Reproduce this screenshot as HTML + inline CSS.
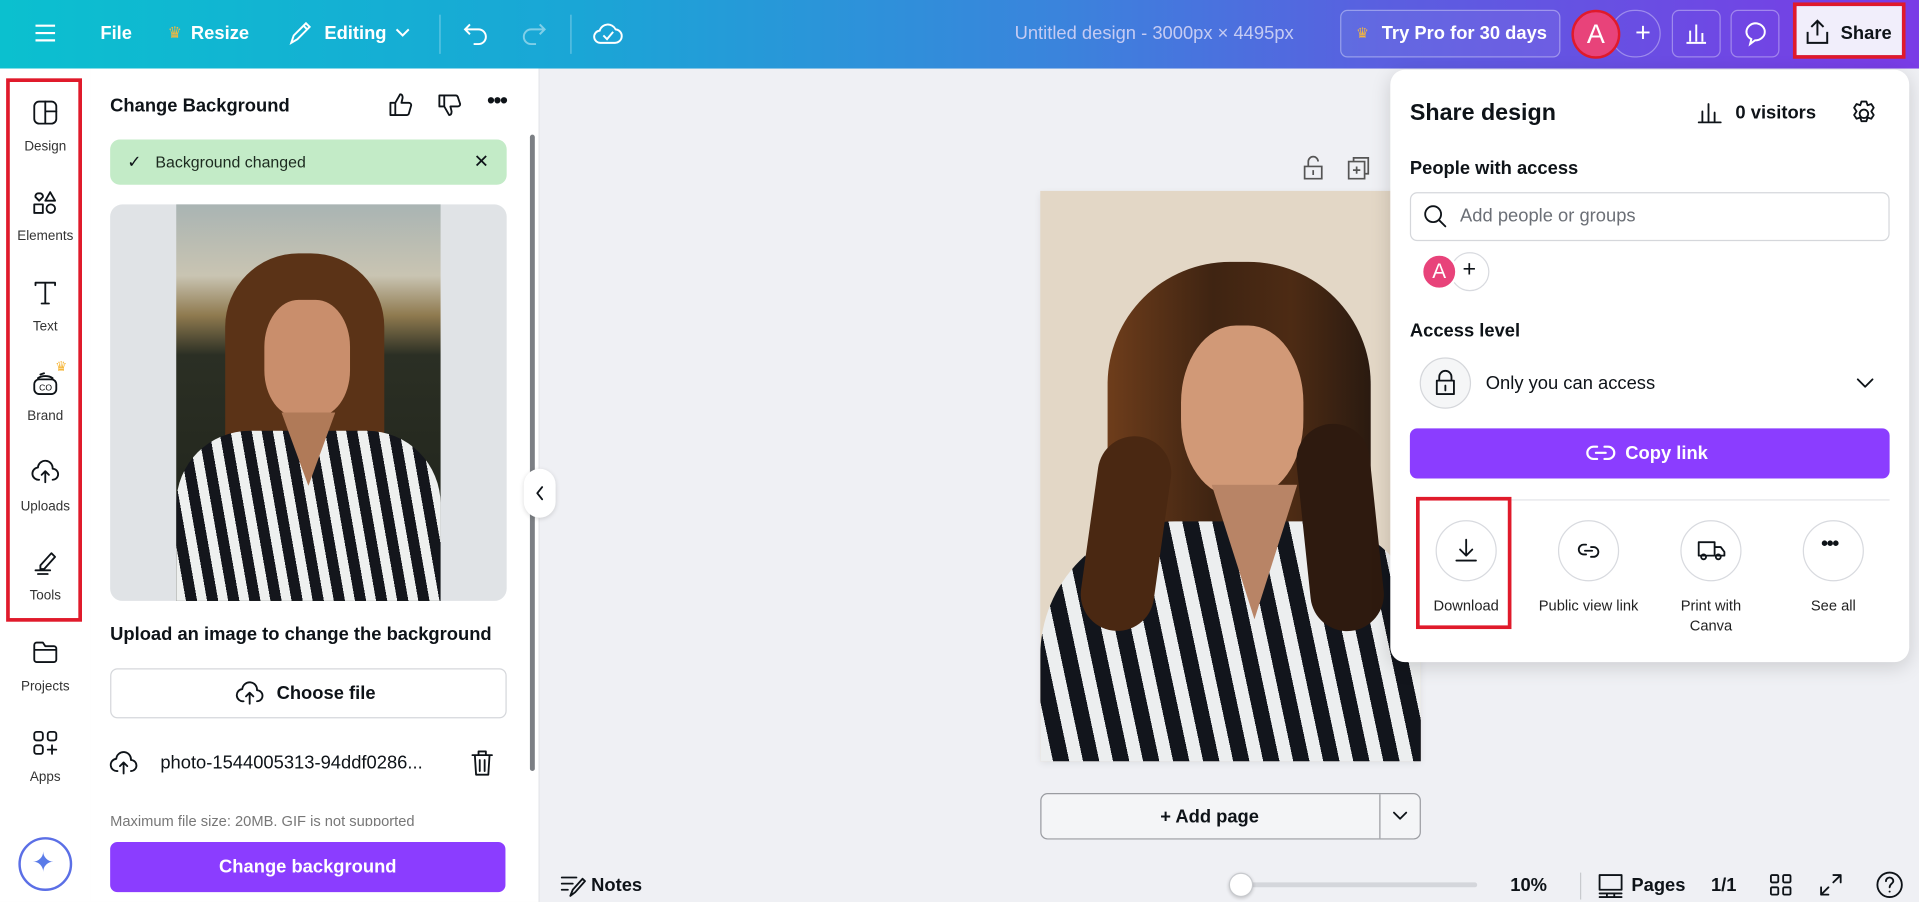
<!DOCTYPE html>
<html><head><meta charset="utf-8">
<style>
*{box-sizing:border-box;margin:0;padding:0}
html,body{width:1919px;height:902px;overflow:hidden;background:#eff0f4}
#w{position:absolute;left:0;top:0;width:1568px;height:737px;transform:scale(1.22385);transform-origin:0 0;font-family:"Liberation Sans",sans-serif;color:#0e1318;background:#eff0f4}
.a{position:absolute}
.top{left:0;top:0;width:1568px;height:56px;background:linear-gradient(90deg,#0bc0cf 0%,#1aa6d6 30%,#3a84dc 55%,#5a5fe0 72%,#7a3be6 100%)}
.tw{color:#fff;font-weight:bold;font-size:15px}
.side{left:0;top:56px;width:74px;height:681px;background:#fff}
.lbl{position:absolute;width:74px;text-align:center;font-size:11px;color:#333;left:0}
.panel{left:74px;top:56px;width:367px;height:681px;background:#fff;border-right:1px solid #e3e4e8}
svg{overflow:visible}
.ic{fill:none;stroke:#0e1318;stroke-width:1.5;stroke-linecap:round;stroke-linejoin:round}
.pop{left:1136px;top:57px;width:424px;height:484px;background:#fff;border-radius:12px;box-shadow:0 4px 16px rgba(0,0,0,.15)}
.circ{position:absolute;width:50px;height:50px;border:1px solid #d8dadf;border-radius:50%;top:425px}
.cl{position:absolute;font-size:12px;color:#222;text-align:center;width:100px;top:487px;line-height:16px}
</style></head><body><div id="w">
<div class="a top"></div>
<!-- top bar -->
<svg class="a" style="left:28px;top:19px" width="18" height="16"><path d="M1 2h16M1 8h16M1 14h16" stroke="#fff" stroke-width="1.8"/></svg>
<div class="a tw" style="left:82px;top:19px">File</div>
<div class="a" style="left:137px;top:19px;color:#f6b73c;font-size:13px">♛</div>
<div class="a tw" style="left:156px;top:19px">Resize</div>
<svg class="a" style="left:235px;top:17px" width="20" height="20"><path d="M3 18l2-6L15 2l3 3L8 15z M13 4l3 3" fill="none" stroke="#fff" stroke-width="1.6"/></svg>
<div class="a tw" style="left:265px;top:19px">Editing</div>
<svg class="a" style="left:322px;top:22px" width="14" height="10"><path d="M2 2l5 5 5-5" fill="none" stroke="#fff" stroke-width="1.6"/></svg>
<div class="a" style="left:359px;top:12px;width:1px;height:32px;background:rgba(255,255,255,.35)"></div>
<svg class="a" style="left:378px;top:17px" width="22" height="20"><path d="M6 3L2 7l4 4M2 7h11a6 6 0 010 12h-4" fill="none" stroke="#fff" stroke-width="1.6"/></svg>
<svg class="a" style="left:425px;top:17px" width="22" height="20"><path d="M16 3l4 4-4 4M20 7H9a6 6 0 000 12h4" fill="none" stroke="rgba(255,255,255,.45)" stroke-width="1.6"/></svg>
<div class="a" style="left:466px;top:12px;width:1px;height:32px;background:rgba(255,255,255,.35)"></div>
<svg class="a" style="left:484px;top:16px" width="24" height="22"><path d="M7 19a5 5 0 01-1-10 7 7 0 0113-1 5 5 0 01-1 11z M9 13l3 3 5-6" fill="none" stroke="#fff" stroke-width="1.6"/></svg>
<div class="a" style="left:829px;top:19px;color:#c5cbf3;font-size:15px">Untitled design - 3000px × 4495px</div>
<div class="a" style="left:1095px;top:8px;width:180px;height:39px;border:1px solid rgba(255,255,255,.35);border-radius:6px;background:rgba(255,255,255,.06)"></div>
<div class="a" style="left:1108px;top:20px;color:#f6b73c;font-size:12px">♛</div>
<div class="a tw" style="left:1129px;top:19px">Try Pro for 30 days</div>
<div class="a" style="left:1316px;top:8px;width:41px;height:39px;border:1px solid rgba(255,255,255,.35);border-radius:20px"></div>
<div class="a" style="left:1336px;top:14px;color:#fff;font-size:22px">+</div>
<div class="a" style="left:1284px;top:8px;width:40px;height:40px;border-radius:50%;background:#e8437a;border:2px solid #e01a2b;color:#fff;font-size:22px;text-align:center;line-height:36px">A</div>
<div class="a" style="left:1366px;top:8px;width:40px;height:39px;border:1px solid rgba(255,255,255,.35);border-radius:6px"></div>
<svg class="a" style="left:1376px;top:17px" width="20" height="20"><path d="M2 18h16M5 17V8M10 17V3M15 17V10" fill="none" stroke="#fff" stroke-width="1.6"/></svg>
<div class="a" style="left:1414px;top:8px;width:40px;height:39px;border:1px solid rgba(255,255,255,.35);border-radius:6px"></div>
<svg class="a" style="left:1424px;top:17px" width="20" height="20"><path d="M10 2a8 7 0 110 14l-4 3 1-4a8 7 0 013-13z" fill="none" stroke="#fff" stroke-width="1.6"/></svg>
<div class="a" style="left:1465px;top:2px;width:92px;height:46px;border:3px solid #e01a2b"></div>
<div class="a" style="left:1468px;top:5px;width:86px;height:40px;background:#f1eefb"></div>
<svg class="a" style="left:1474px;top:15px" width="22" height="22"><path d="M11 14V2M6 7l5-5 5 5M3 11v9h16v-9" fill="none" stroke="#0e1318" stroke-width="1.6"/></svg>
<div class="a" style="left:1504px;top:19px;font-size:15px;font-weight:bold;color:#0e1318">Share</div>

<!-- sidebar -->
<div class="a side"></div>
<div class="a" style="left:5px;top:64px;width:62px;height:444px;border:3px solid #e01a2b"></div>
<svg class="a" style="left:27px;top:82px" width="20" height="20"><rect x="1" y="1" width="18" height="18" rx="4" class="ic"/><path d="M10 1v18M10 9h9" class="ic"/></svg>
<div class="lbl" style="top:114px">Design</div>
<svg class="a" style="left:27px;top:156px" width="20" height="20"><path d="M5 2a2.5 2.5 0 013 3L5 8 2 5a2.5 2.5 0 013-3zM14 1l4 7h-8z" class="ic"/><rect x="1" y="11" width="7" height="7" class="ic"/><circle cx="14.5" cy="14.5" r="3.5" class="ic"/></svg>
<div class="lbl" style="top:187px">Elements</div>
<svg class="a" style="left:27px;top:229px" width="20" height="20"><path d="M2 4V2h16v2M10 2v17M7 19h6" class="ic"/></svg>
<div class="lbl" style="top:261px">Text</div>
<div class="a" style="left:45px;top:293px;color:#f6b73c;font-size:11px">♛</div>
<svg class="a" style="left:27px;top:303px" width="20" height="20"><rect x="1" y="7" width="18" height="12" rx="4" class="ic"/><path d="M4 6a8 5 0 0112 0M6 3l3-1" class="ic"/><text x="5" y="16" font-size="7" font-family="Liberation Sans">CO</text></svg>
<div class="lbl" style="top:334px">Brand</div>
<svg class="a" style="left:26px;top:376px" width="22" height="20"><path d="M6 16a5 5 0 01-1-10 6 6 0 0112 1 4 4 0 010 9M11 18V9M8 12l3-3 3 3" class="ic"/></svg>
<div class="lbl" style="top:408px">Uploads</div>
<svg class="a" style="left:27px;top:450px" width="20" height="20"><path d="M6 12l9-10 3 3-9 10H6zM2 16h12M4 19h8" class="ic"/></svg>
<div class="lbl" style="top:481px">Tools</div>
<svg class="a" style="left:27px;top:523px" width="20" height="20"><path d="M1 4a2 2 0 012-2h5l2 3h7a2 2 0 012 2v9a2 2 0 01-2 2H3a2 2 0 01-2-2z M1 8h18" class="ic"/></svg>
<div class="lbl" style="top:555px">Projects</div>
<svg class="a" style="left:27px;top:597px" width="20" height="20"><rect x="1" y="1" width="7" height="7" rx="2" class="ic"/><rect x="12" y="1" width="7" height="7" rx="2" class="ic"/><rect x="1" y="12" width="7" height="7" rx="2" class="ic"/><path d="M15.5 12v7M12 15.5h7" class="ic"/></svg>
<div class="lbl" style="top:629px">Apps</div>
<div class="a" style="left:15px;top:684px;width:44px;height:44px;border-radius:50%;border:2px solid #5b6fe6;background:#fff"></div>
<div class="a" style="left:26px;top:692px;font-size:22px;color:#5a7be8">✦</div>

<!-- panel -->
<div class="a panel"></div>
<div class="a" style="left:90px;top:78px;font-size:15px;font-weight:bold">Change Background</div>
<svg class="a" style="left:317px;top:75px" width="20" height="20"><path d="M2 9h4v10H2zM6 9l4-7c2 0 2 2 2 3l-1 4h6a2 2 0 012 2l-2 7a2 2 0 01-2 1H6" class="ic"/></svg>
<svg class="a" style="left:357px;top:76px" width="20" height="20"><path d="M2 2h4v9H2zM6 11l4 7c2 0 2-2 2-3l-1-4h6a2 2 0 002-2l-2-6a2 2 0 00-2-1H6" class="ic"/></svg>
<div class="a" style="left:398px;top:72px;font-size:18px;font-weight:bold;letter-spacing:-1px">•••</div>
<div class="a" style="left:432px;top:100px;width:6px;height:530px;"><div style="margin:10px auto 0;width:4px;height:520px;background:#7c7f84;border-radius:2px"></div></div>
<div class="a" style="left:90px;top:114px;width:324px;height:37px;background:#c3ebc7;border-radius:8px"></div>
<div class="a" style="left:104px;top:124px;font-size:14px">✓</div>
<div class="a" style="left:127px;top:125px;font-size:13px;color:#1c2a1f">Background changed</div>
<div class="a" style="left:387px;top:123px;font-size:15px">✕</div>
<div class="a" style="left:90px;top:167px;width:324px;height:324px;background:#e0e3e6;border-radius:10px"></div>
<div class="a" style="left:144px;top:167px;width:216px;height:324px;overflow:hidden;background:linear-gradient(180deg,#a9b4b3 0%,#c9c4b2 18%,#8f7a4f 28%,#2b2f24 38%,#1d2119 100%)">
 <div class="a" style="left:40px;top:40px;width:130px;height:240px;border-radius:60px 60px 20px 20px;background:#5b3317"></div>
 <div class="a" style="left:72px;top:78px;width:70px;height:96px;border-radius:40%;background:#c98e6c"></div>
 <div class="a" style="left:0;top:185px;width:216px;height:140px;border-radius:60px 60px 0 0;background:repeating-linear-gradient(80deg,#eef0ef 0 8px,#14161c 8px 17px)"></div>
 <div class="a" style="left:86px;top:170px;width:44px;height:60px;background:#b07a58;clip-path:polygon(0 0,100% 0,50% 100%)"></div>
</div>
<div class="a" style="left:90px;top:510px;font-size:15px;font-weight:bold">Upload an image to change the background</div>
<div class="a" style="left:90px;top:546px;width:324px;height:41px;border:1px solid #d5d7db;border-radius:6px"></div>
<svg class="a" style="left:193px;top:557px" width="22" height="20"><path d="M6 16a5 5 0 01-1-10 6 6 0 0112 1 4 4 0 010 9M11 18V9M8 12l3-3 3 3" class="ic"/></svg>
<div class="a" style="left:226px;top:558px;font-size:15px;font-weight:bold">Choose file</div>
<svg class="a" style="left:90px;top:614px" width="22" height="20"><path d="M6 16a5 5 0 01-1-10 6 6 0 0112 1 4 4 0 010 9M11 18V9M8 12l3-3 3 3" class="ic"/></svg>
<div class="a" style="left:131px;top:615px;font-size:15px">photo-1544005313-94ddf0286...</div>
<svg class="a" style="left:385px;top:613px" width="18" height="22"><path d="M1 4h16M6 4V1h6v3M3 4l1 16h10l1-16M7 8v9M11 8v9" class="ic"/></svg>
<div class="a" style="left:90px;top:663px;width:330px;height:12px;overflow:hidden;font-size:12px;color:#777;line-height:16px">Maximum file size: 20MB. GIF is not supported</div>
<div class="a" style="left:90px;top:688px;width:323px;height:41px;background:#8b3dff;border-radius:6px;color:#fff;font-size:15px;font-weight:bold;text-align:center;line-height:41px">Change background</div>
<div class="a" style="left:428px;top:383px;width:26px;height:40px;background:#fff;border-radius:13px;box-shadow:0 1px 4px rgba(0,0,0,.15)"></div>
<svg class="a" style="left:437px;top:397px" width="8" height="12"><path d="M6 1L2 6l4 5" class="ic"/></svg>

<!-- canvas -->
<svg class="a" style="left:1064px;top:127px" width="18" height="20"><path d="M5 9V5a4 4 0 018 0M2 9h14v10H2zM9 12v4" fill="none" stroke="#555" stroke-width="1.4"/></svg>
<svg class="a" style="left:1101px;top:128px" width="18" height="20"><path d="M5 4V1h12v13h-3M1 4h13v14H1zM7.5 8v6M4.5 11h6" fill="none" stroke="#555" stroke-width="1.4"/></svg>
<div class="a" style="left:850px;top:156px;width:311px;height:466px;overflow:hidden;background:#e3d7c6;box-shadow:0 2px 6px rgba(0,0,0,.08)">
 <div class="a" style="left:55px;top:58px;width:215px;height:360px;border-radius:100px 100px 30px 30px;background:linear-gradient(90deg,#6e3d1b,#3f2412 40%,#4d2b14 70%,#2a1a10)"></div>
 <div class="a" style="left:115px;top:110px;width:100px;height:140px;border-radius:45%;background:#d19977"></div>
 <div class="a" style="left:0;top:270px;width:311px;height:200px;border-radius:110px 90px 0 0;background:repeating-linear-gradient(78deg,#eceeef 0 11px,#12151c 11px 24px)"></div>
 <div class="a" style="left:140px;top:240px;width:70px;height:110px;background:#b88466;clip-path:polygon(0 0,100% 0,50% 100%)"></div>
 <div class="a" style="left:40px;top:200px;width:60px;height:160px;background:#4a2812;border-radius:30px;transform:rotate(8deg)"></div>
 <div class="a" style="left:215px;top:190px;width:60px;height:170px;background:#2e1a0f;border-radius:30px;transform:rotate(-6deg)"></div>
</div>
<div class="a" style="left:850px;top:648px;width:311px;height:38px;border:1px solid #9a9ca1;border-radius:6px;background:#f4f5f7"></div>
<div class="a" style="left:1127px;top:649px;width:1px;height:36px;background:#9a9ca1"></div>
<div class="a" style="left:948px;top:659px;font-size:15px;font-weight:bold">+ Add page</div>
<svg class="a" style="left:1138px;top:663px" width="12" height="8"><path d="M1 1l5 5 5-5" class="ic"/></svg>

<!-- bottom bar -->
<svg class="a" style="left:458px;top:715px" width="20" height="18"><path d="M1 2h12M1 7h9M1 12h5M8 17l2-5 8-9 2 2-8 9z" class="ic"/></svg>
<div class="a" style="left:483px;top:715px;font-size:15px;font-weight:bold">Notes</div>
<div class="a" style="left:1010px;top:721px;width:197px;height:4px;background:#d4d6db;border-radius:2px"></div>
<div class="a" style="left:1004px;top:713px;width:20px;height:20px;border-radius:50%;background:#fff;border:1px solid #c8cace;box-shadow:0 1px 3px rgba(0,0,0,.2)"></div>
<div class="a" style="left:1234px;top:715px;font-size:15px;font-weight:bold">10%</div>
<div class="a" style="left:1291px;top:713px;width:1px;height:22px;background:#c8cace"></div>
<svg class="a" style="left:1306px;top:714px" width="20" height="20"><rect x="1" y="1" width="18" height="12" class="ic"/><path d="M1 16h18M1 19h18M7 16v3M13 16v3" class="ic"/></svg>
<div class="a" style="left:1333px;top:715px;font-size:15px;font-weight:bold">Pages</div>
<div class="a" style="left:1398px;top:715px;font-size:15px;font-weight:bold">1/1</div>
<svg class="a" style="left:1446px;top:714px" width="18" height="18"><rect x="1" y="1" width="6" height="6" rx="1" class="ic"/><rect x="11" y="1" width="6" height="6" rx="1" class="ic"/><rect x="1" y="11" width="6" height="6" rx="1" class="ic"/><rect x="11" y="11" width="6" height="6" rx="1" class="ic"/></svg>
<svg class="a" style="left:1487px;top:714px" width="18" height="18"><path d="M11 1h6v6M17 1l-6 6M7 17H1v-6M1 17l6-6" class="ic"/></svg>
<svg class="a" style="left:1533px;top:712px" width="22" height="22"><circle cx="11" cy="11" r="10" class="ic"/><path d="M8 8a3 3 0 116 0c0 2-3 2-3 5" class="ic"/><circle cx="11" cy="16.5" r=".8" fill="#0e1318"/></svg>

<!-- share popover -->
<div class="a pop"></div>
<div class="a" style="left:1152px;top:82px;font-size:19px;font-weight:bold">Share design</div>
<svg class="a" style="left:1387px;top:83px" width="20" height="18"><path d="M1 17h18M4 16V8M9 16V2M14 16V9" class="ic"/></svg>
<div class="a" style="left:1418px;top:84px;font-size:15px;font-weight:bold">0 visitors</div>
<svg class="a" style="left:1512px;top:82px" width="22" height="22"><circle cx="11" cy="11" r="3.5" class="ic"/><path d="M9 1h4l1 3 3-1 2 3-2 3 2 3-2 3-3-1-1 3H9l-1-3-3 1-2-3 2-3-2-3 2-3 3 1z" class="ic"/></svg>
<div class="a" style="left:1152px;top:129px;font-size:15px;font-weight:bold">People with access</div>
<div class="a" style="left:1152px;top:157px;width:392px;height:40px;border:1px solid #d5d7db;border-radius:6px"></div>
<svg class="a" style="left:1163px;top:167px" width="20" height="20"><circle cx="8" cy="8" r="6.5" class="ic"/><path d="M13 13l5 5" class="ic"/></svg>
<div class="a" style="left:1193px;top:168px;font-size:15px;color:#6b6f76">Add people or groups</div>
<div class="a" style="left:1185px;top:206px;width:32px;height:32px;border-radius:50%;border:1px solid #d8dadf;background:#fff"></div>
<div class="a" style="left:1195px;top:210px;font-size:19px">+</div>
<div class="a" style="left:1161px;top:207px;width:30px;height:30px;border-radius:50%;background:#e8437a;border:2px solid #fff;color:#fff;font-size:17px;text-align:center;line-height:26px">A</div>
<div class="a" style="left:1152px;top:262px;font-size:15px;font-weight:bold">Access level</div>
<div class="a" style="left:1160px;top:292px;width:42px;height:42px;border-radius:50%;border:1px solid #d5d7db;background:#f5f6f7"></div>
<svg class="a" style="left:1172px;top:302px" width="18" height="22"><path d="M4 9V6a5 5 0 0110 0v3M2 9h14v11H2zM9 13v4" class="ic"/></svg>
<div class="a" style="left:1214px;top:305px;font-size:15px">Only you can access</div>
<svg class="a" style="left:1517px;top:309px" width="14" height="9"><path d="M1 1l6 6 6-6" class="ic"/></svg>
<div class="a" style="left:1152px;top:350px;width:392px;height:41px;background:#8b3dff;border-radius:6px"></div>
<svg class="a" style="left:1296px;top:361px" width="24" height="18"><path d="M9 4H6a5 5 0 000 10h3M15 4h3a5 5 0 010 10h-3M8 9h8" fill="none" stroke="#fff" stroke-width="1.8" stroke-linecap="round"/></svg>
<div class="a" style="left:1328px;top:362px;font-size:15px;font-weight:bold;color:#fff">Copy link</div>
<div class="a" style="left:1235px;top:408px;width:309px;height:1px;background:#e3e4e8"></div>
<div class="a" style="left:1157px;top:406px;width:78px;height:108px;border:3px solid #e01a2b"></div>
<div class="circ" style="left:1173px"></div>
<svg class="a" style="left:1187px;top:439px" width="22" height="22"><path d="M11 2v13M6 10l5 5 5-5M3 19h16" class="ic"/></svg>
<div class="circ" style="left:1273px"></div>
<svg class="a" style="left:1287px;top:439px" width="22" height="22"><path d="M9 6H7a4 4 0 000 8h2M13 8h2a4 4 0 010 8h-2M8 11h6" class="ic"/></svg>
<div class="circ" style="left:1373px"></div>
<svg class="a" style="left:1387px;top:440px" width="24" height="20"><path d="M1 3h13v11H1zM14 7h5l3 4v3h-8M5 17a2 2 0 100-4 2 2 0 000 4zM17 17a2 2 0 100-4 2 2 0 000 4z" class="ic"/></svg>
<div class="circ" style="left:1473px"></div>
<div class="a" style="left:1488px;top:436px;font-size:16px;font-weight:bold;letter-spacing:-1px">•••</div>
<div class="cl" style="left:1148px">Download</div>
<div class="cl" style="left:1248px">Public view link</div>
<div class="cl" style="left:1348px">Print with<br>Canva</div>
<div class="cl" style="left:1448px">See all</div>
</div></body></html>
